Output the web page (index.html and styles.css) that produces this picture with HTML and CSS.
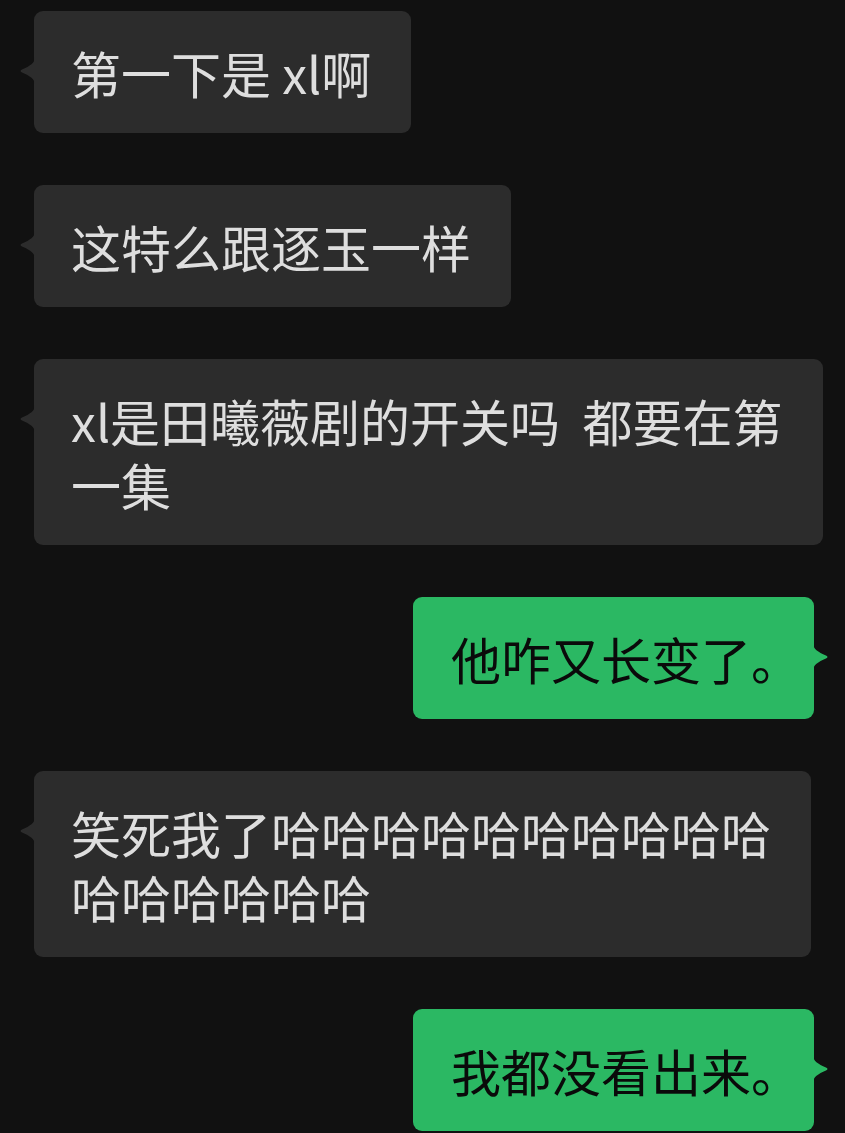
FILE: index.html
```html
<!DOCTYPE html>
<html lang="zh-CN">
<head>
  <meta charset="UTF-8" />
  <meta name="viewport" content="width=device-width, initial-scale=1" />
  <title>聊天</title>
  <link rel="stylesheet" href="styles.css">
</head>
<body>

  <div class="chat">
    <div class="msg in">第一下是 xl啊</div>
    <div class="msg in">这特么跟逐玉一样</div>
    <div class="msg in">xl是田曦薇剧的开关吗&nbsp; 都要在第<br>一集</div>
    <div class="msg out">他咋又长变了。</div>
    <div class="msg in">笑死我了哈哈哈哈哈哈哈哈哈哈<br>哈哈哈哈哈哈</div>
    <div class="msg out">我都没看出来。</div>
  </div>

</body>
</html>
```

FILE: styles.css
```css
body {
  margin: 0;
  background: #111111;
  font-family: "Noto Sans CJK SC", "Noto Sans", sans-serif;
  overflow: hidden;
}

.chat {
  display: flex;
  flex-direction: column;
  gap: 52px;
  padding: 11px 31px 0 34px;
}

.msg {
  position: relative;
  padding: 29px 40px 29px 37px;
  font-size: 50px;
  line-height: 64px;
  border-radius: 9px;
  white-space: nowrap;
}

.msg::before {
  content: "";
  position: absolute;
  top: 46px;
  width: 16px;
  height: 28px;
}

.in {
  align-self: flex-start;
  background: #2c2c2c;
  color: #dedede;
}

.in::before {
  left: -15px;
  background: #2c2c2c;
  clip-path: path("M16 0 C16 6 11 9 3 12.5 Q0 14 3 15.5 C11 19 16 22 16 28 Z");
}

/* trailing 。 is trimmed in the original, so the right padding is short */
.out {
  align-self: flex-end;
  background: #2bb863;
  color: #0a0a0a;
  padding-left: 38px;
  padding-right: 13px;
}

.out::before {
  right: -15px;
  background: #2bb863;
  clip-path: path("M0 0 C0 6 5 9 13 12.5 Q16 14 13 15.5 C5 19 0 22 0 28 Z");
}
```
